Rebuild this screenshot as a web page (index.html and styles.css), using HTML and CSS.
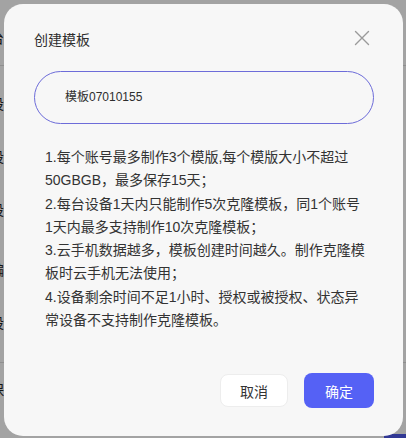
FILE: index.html
```html
<!DOCTYPE html>
<html lang="zh-CN">
<head>
<meta charset="utf-8">
<title>创建模板</title>
<link rel="stylesheet" href="styles.css">
</head>
<body>
<div class="page">
  <div class="page-row r1">台</div>
  <div class="page-line"></div>
  <div class="page-row r2">设</div>
  <div class="page-row r3">设</div>
  <div class="page-row r4">设</div>
  <div class="page-row r5">编</div>
  <div class="page-row r6">设</div>
  <div class="page-line"></div>
  <div class="page-row r7">保</div>
  <div class="page-btn"></div>
</div>
<div class="mask"></div>
<div class="modal">
  <div class="modal-header">
    <div class="modal-title">创建模板</div>
    <svg class="close" width="16" height="16" viewBox="0 0 16 16" aria-hidden="true">
      <path d="M1.5 1.5 L14.5 14.5 M14.5 1.5 L1.5 14.5" stroke="#9a9a9a" stroke-width="1.4" fill="none" stroke-linecap="round"/>
    </svg>
  </div>
  <div class="input-box">模板07010155</div>
  <div class="notes">
    <p>1.每个账号最多制作3个模版,每个模版大小不超过50GBGB，最多保存15天；</p>
    <p>2.每台设备1天内只能制作5次克隆模板，同1个账号1天内最多支持制作10次克隆模板；</p>
    <p>3.云手机数据越多，模板创建时间越久。制作克隆模板时云手机无法使用；</p>
    <p>4.设备剩余时间不足1小时、授权或被授权、状态异常设备不支持制作克隆模板。</p>
  </div>
  <div class="modal-footer">
    <button class="btn btn-cancel">取消</button>
    <button class="btn btn-ok">确定</button>
  </div>
</div>
</body>
</html>
```
FILE: styles.css
```css
html, body {
  margin: 0;
  padding: 0;
}
body {
  width: 406px;
  height: 438px;
  overflow: hidden;
  background: #ffffff;
  font-family: "Liberation Sans", "Noto Sans CJK SC", sans-serif;
  color: #333333;
}
.page {
  display: flex;
  flex-direction: column;
  height: 438px;
  position: relative;
}
.page-row {
  font-size: 14px;
  margin-left: -10px;
  color: #222;
  flex: none;
}
.r1 { height: 65px; line-height: 76px; }
.r2 { height: 64px; line-height: 76px; }
.r3 { height: 53px; line-height: 54px; }
.r4 { height: 53px; line-height: 54px; }
.r5 { height: 60px; line-height: 68px; }
.r6 { height: 66px; line-height: 54px; }
.r7 { height: 60px; line-height: 54px; }
.page-line {
  height: 1px;
  background: #e0e0e0;
  flex: none;
}
.page-btn {
  position: absolute;
  right: 0;
  bottom: 0;
  width: 22px;
  height: 4px;
  background: #4d58e8;
}
.mask {
  position: fixed;
  inset: 0;
  background: rgba(0, 0, 0, 0.36);
}
.modal {
  position: fixed;
  left: 4px;
  top: 4px;
  width: 399px;
  height: 432px;
  box-sizing: border-box;
  padding: 0 29px 0 30px;
  background: #f7f7f7;
  border-radius: 19px;
  display: flex;
  flex-direction: column;
}
.modal-header {
  display: flex;
  justify-content: space-between;
  align-items: center;
  padding-top: 26px;
  height: 20px;
  margin-bottom: 21px;
}
.modal-title {
  font-size: 14px;
  line-height: 20px;
  color: #2e2e2e;
}
.close {
  margin-right: 4px;
  margin-top: -4px;
}
.input-box {
  height: 53px;
  box-sizing: border-box;
  border: 1px solid #6d6cd9;
  border-radius: 27px;
  padding-left: 30px;
  font-size: 12px;
  line-height: 51px;
  color: #2e2e2e;
}
.notes {
  margin: 22px 0 0 11px;
  width: 321px;
  font-size: 14px;
  line-height: 23.3px;
  color: #333333;
}
.notes p {
  margin: 0;
}
.modal-footer {
  margin-top: auto;
  margin-bottom: 28px;
  display: flex;
  justify-content: flex-end;
  align-items: center;
  gap: 16px;
}
.btn {
  font-family: "Liberation Sans", "Noto Sans CJK SC", sans-serif;
  font-size: 14px;
  border-radius: 8px;
  padding: 0;
  cursor: pointer;
}
.btn-cancel {
  width: 68px;
  height: 33px;
  background: #ffffff;
  border: 1px solid #ededed;
  color: #333333;
}
.btn-ok {
  width: 70px;
  height: 35px;
  background: #5561f5;
  border: none;
  color: #ffffff;
}
```
